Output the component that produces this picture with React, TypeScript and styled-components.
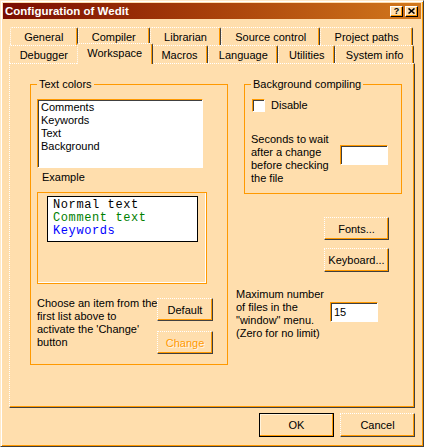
import React from 'react';
import styled, { createGlobalStyle, css } from 'styled-components';

const PEACH = '#FFDEAD';
const ORANGE = '#FF9900';
const SHADOW = '#404040';

const GlobalStyle = createGlobalStyle`
  html, body {
    margin: 0;
    padding: 0;
    background: ${PEACH};
  }
  body {
    font-family: "Liberation Sans", Arial, sans-serif;
    font-size: 11px;
    color: #000;
  }
  * {
    box-sizing: border-box;
  }
`;

const Window = styled.div`
  width: 424px;
  height: 447px;
  background: ${PEACH};
  border: 1px solid;
  border-color: #ffe9c8 ${SHADOW} ${SHADOW} #ffe9c8;
  box-shadow: inset 1px 1px #fff, inset -1px -1px ${ORANGE};
  padding: 2px;
  display: flex;
  flex-direction: column;
`;

const TitleBar = styled.div`
  height: 16px;
  display: flex;
  align-items: center;
  padding: 0 3px 0 2px;
  background: linear-gradient(90deg, #7a0c00 0%, #a8400a 50%, #d2781c 100%);
`;

const Title = styled.div`
  flex: 1;
  color: #fff;
  font-weight: bold;
  font-size: 11.5px;
  line-height: 16px;
  white-space: nowrap;
`;

const CaptionButtons = styled.div`
  display: flex;
  gap: 2px;
`;

const CaptionButton = styled.div`
  width: 13px;
  height: 11px;
  background: ${PEACH};
  border-top: 1px solid #fff;
  border-left: 1px solid #fff;
  border-right: 1px solid #000;
  border-bottom: 1px solid #000;
  box-shadow: inset -1px -1px ${ORANGE};
  display: flex;
  align-items: center;
  justify-content: center;
  font-weight: bold;
  font-size: 9px;
  line-height: 9px;
`;

const Body = styled.div`
  display: flex;
  flex-direction: column;
  padding: 8px 6px 0;
`;

const TabRow = styled.div<{ $inset: string }>`
  display: flex;
  margin: ${p => p.$inset};
`;

const Tab = styled.div<{ $active?: boolean }>`
  flex: 1 1 auto;
  height: 18px;
  padding: 3px 6px 0;
  line-height: 13px;
  text-align: center;
  white-space: nowrap;
  background: ${PEACH};
  border-top: 1px dotted #fff;
  border-left: 1px dotted #fff;
  border-right: 1px solid ${SHADOW};
  box-shadow: inset -1px 0 ${ORANGE};
  border-radius: 2px 2px 0 0;

  ${p => p.$active && css`
    height: 21px;
    margin: -2px -2px -1px;
    position: relative;
    z-index: 1;
  `}
`;

const Panel = styled.div`
  height: 345px;
  border-top: 1px dotted #fff;
  border-left: 1px dotted #fff;
  border-right: 1px solid ${SHADOW};
  border-bottom: 1px solid ${SHADOW};
  box-shadow: inset -1px -1px ${ORANGE};
  padding: 20px 0 0 20px;
  display: grid;
  grid-template-columns: 198px 166px;
  column-gap: 8px;
  align-items: start;
`;

const GroupBox = styled.div<{ $w: number; $h: number }>`
  position: relative;
  width: ${p => p.$w}px;
  height: ${p => p.$h}px;
  border: 1px solid ${ORANGE};
  display: flex;
  flex-direction: column;
  align-items: flex-start;
`;

const GroupLabel = styled.div`
  position: absolute;
  top: -7px;
  left: 6px;
  padding: 0 2px;
  line-height: 13px;
  background: ${PEACH};
  white-space: nowrap;
`;

const sunken = css`
  background: #fff;
  border: 1px solid;
  border-color: ${ORANGE} #fff #fff ${ORANGE};
  border-right-style: dotted;
  border-bottom-style: dotted;
  box-shadow: inset 1px 1px ${SHADOW};
`;

const ListBox = styled.div`
  ${sunken}
  width: 166px;
  height: 69px;
  margin: 14px 0 0 6px;
  padding: 1px 3px;
  line-height: 13px;
`;

const Caption = styled.div`
  margin: 3px 0 0 11px;
  line-height: 13px;
`;

const ExampleFrame = styled.div`
  width: 170px;
  height: 92px;
  margin: 8px 0 0 6px;
  border: 1px solid ${ORANGE};
  box-shadow: inset -1px -1px #fff;
`;

const Paper = styled.div`
  width: 151px;
  height: 46px;
  margin: 3px 0 0 9px;
  background: #fff;
  border: 1px solid #000;
  padding: 2px 0 0 5px;
  font-family: "Liberation Mono", "Courier New", monospace;
  font-size: 12px;
  letter-spacing: 0.6px;
  line-height: 13px;
`;

const Sample = styled.div<{ $color: string }>`
  color: ${p => p.$color};
  white-space: nowrap;
`;

const ChooseRow = styled.div`
  display: flex;
  margin: 13px 0 0 6px;
`;

const Note = styled.div<{ $w: number }>`
  width: ${p => p.$w}px;
  line-height: 13px;
  white-space: nowrap;
`;

const ButtonColumn = styled.div`
  display: flex;
  flex-direction: column;
  gap: 10px;
  margin-top: 1px;
`;

const Button = styled.button<{ $w: number; $h?: number; $default?: boolean; $disabled?: boolean }>`
  width: ${p => p.$w}px;
  height: ${p => p.$h ?? 23}px;
  padding: 0;
  font-family: "Liberation Sans", Arial, sans-serif;
  font-size: 11px;
  color: ${p => (p.$disabled ? ORANGE : '#000')};
  text-shadow: ${p => (p.$disabled ? '1px 1px #fff6e6' : 'none')};
  background: ${PEACH};
  border-top: 1px dotted #fff;
  border-left: 1px dotted #fff;
  border-right: 1px solid ${SHADOW};
  border-bottom: 1px solid ${SHADOW};
  box-shadow: inset -1px -1px ${ORANGE};
  cursor: default;

  ${p => p.$default && css`
    border: 1px solid #000;
    box-shadow: inset -1px -1px ${ORANGE}, inset 1px 1px #fff3dc;
  `}
`;

const RightColumn = styled.div`
  display: flex;
  flex-direction: column;
  align-items: flex-start;
`;

const BgGroup = styled(GroupBox)`
  margin-left: 8px;
  padding: 14px 0 0 6px;
`;

const CheckRow = styled.label`
  display: flex;
  align-items: center;
  gap: 6px;
  margin-left: 1px;
  line-height: 13px;
`;

const CheckBox = styled.span`
  ${sunken}
  width: 13px;
  height: 13px;
`;

const FieldRow = styled.div<{ $top: number }>`
  display: flex;
  align-items: flex-start;
  margin-top: ${p => p.$top}px;
`;

const TextField = styled.div<{ $top: number }>`
  ${sunken}
  width: 48px;
  height: 20px;
  margin-top: ${p => p.$top}px;
  padding: 0 3px;
  line-height: 18px;
`;

const ButtonStack = styled.div`
  display: flex;
  flex-direction: column;
  gap: 8px;
  margin: 23px 0 0 88px;
`;

const Footer = styled.div`
  display: flex;
  justify-content: flex-end;
  gap: 6px;
  margin-top: 5px;
`;

const row1 = ['General', 'Compiler', 'Librarian', 'Source control', 'Project paths'];
const row2 = ['Debugger', 'Workspace', 'Macros', 'Language', 'Utilities', 'System info'];

export default function App() {
  return (
    <>
      <GlobalStyle />
      <Window>
        <TitleBar>
          <Title>Configuration of Wedit</Title>
          <CaptionButtons>
            <CaptionButton>?</CaptionButton>
            <CaptionButton>
              <svg width="7" height="6" viewBox="0 0 7 6">
                <path d="M0.5 0.5 L6.5 5.5 M6.5 0.5 L0.5 5.5" stroke="#000" strokeWidth="1.6" />
              </svg>
            </CaptionButton>
          </CaptionButtons>
        </TitleBar>

        <Body>
          <TabRow $inset="0 2px 0 1px">
            {row1.map(t => <Tab key={t}>{t}</Tab>)}
          </TabRow>
          <TabRow $inset="0 1px 0 0">
            {row2.map(t => <Tab key={t} $active={t === 'Workspace'}>{t}</Tab>)}
          </TabRow>

          <Panel>
            <GroupBox $w={198} $h={281}>
              <GroupLabel>Text colors</GroupLabel>
              <ListBox>
                <div>Comments</div>
                <div>Keywords</div>
                <div>Text</div>
                <div>Background</div>
              </ListBox>
              <Caption>Example</Caption>
              <ExampleFrame>
                <Paper>
                  <Sample $color="#000">Normal text</Sample>
                  <Sample $color="#008000">Comment text</Sample>
                  <Sample $color="#0000ff">Keywords</Sample>
                </Paper>
              </ExampleFrame>
              <ChooseRow>
                <Note $w={120}>
                  Choose an item from the<br />
                  first list above to<br />
                  activate the 'Change'<br />
                  button
                </Note>
                <ButtonColumn>
                  <Button $w={56}>Default</Button>
                  <Button $w={56} $disabled>Change</Button>
                </ButtonColumn>
              </ChooseRow>
            </GroupBox>

            <RightColumn>
              <BgGroup $w={158} $h={110}>
                <GroupLabel>Background compiling</GroupLabel>
                <CheckRow>
                  <CheckBox />
                  Disable
                </CheckRow>
                <FieldRow $top={21}>
                  <Note $w={89}>
                    Seconds to wait<br />
                    after a change<br />
                    before checking<br />
                    the file
                  </Note>
                  <TextField $top={12} />
                </FieldRow>
              </BgGroup>

              <ButtonStack>
                <Button $w={65}>Fonts...</Button>
                <Button $w={65} $h={24}>Keyboard...</Button>
              </ButtonStack>

              <FieldRow $top={16}>
                <Note $w={94}>
                  Maximum number<br />
                  of files in the<br />
                  "window" menu.<br />
                  (Zero for no limit)
                </Note>
                <TextField $top={14}>15</TextField>
              </FieldRow>
            </RightColumn>
          </Panel>

          <Footer>
            <Button $w={75} $h={24} $default>OK</Button>
            <Button $w={75} $h={24}>Cancel</Button>
          </Footer>
        </Body>
      </Window>
    </>
  );
}
